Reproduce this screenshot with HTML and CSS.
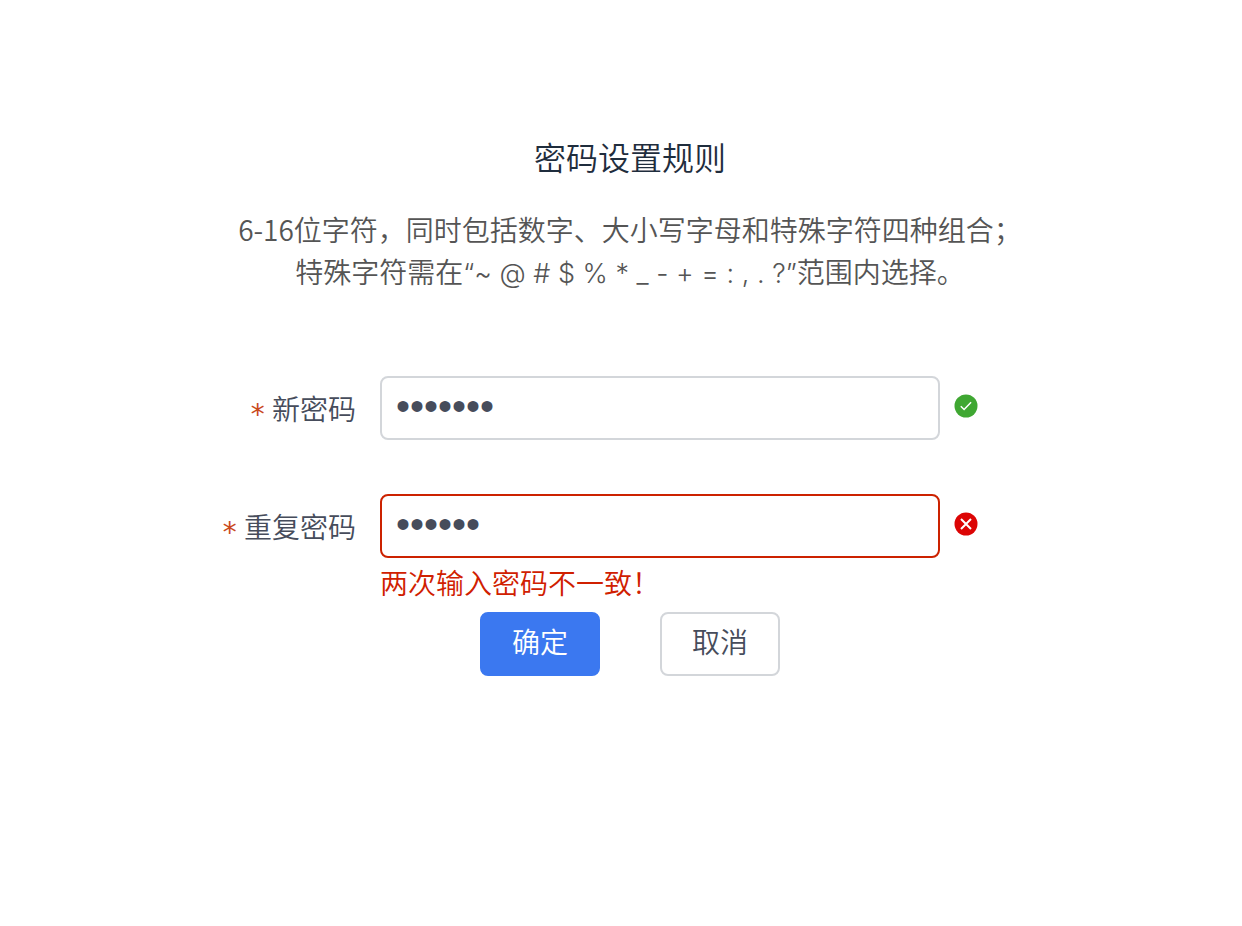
FILE: index.html
```
<!DOCTYPE html>
<html lang="zh-CN">
<head>
  <meta charset="UTF-8" />
  <meta name="viewport" content="width=device-width, initial-scale=1.0"/>
  <title>密码设置规则</title>
  <link rel="stylesheet" href="styles.css">
</head>
<body>
  <main class="page">
    <h1 class="title">密码设置规则</h1>
    <p class="rules">6-16位字符，同时包括数字、大小写字母和特殊字符四种组合；<br>特殊字符需在<span class="symbols">“~ @ # $ % * _ - + = : , . ?”</span>范围内选择。</p>

    <form class="form">
      <div class="row">
        <label class="label" for="password"><span class="star">*</span>新密码</label>
        <input class="input" id="password" type="password" value="Abc12#$">
        <svg class="icon" viewBox="0 0 24 24" aria-hidden="true">
          <circle cx="12" cy="12" r="11.5" fill="#3fa732"/>
          <path d="M6.8 12.3l3.3 3.2 7-7.2" fill="none" stroke="#fff" stroke-width="1.5"/>
        </svg>
      </div>
      <div class="row">
        <label class="label" for="repeat"><span class="star">*</span>重复密码</label>
        <input class="input error" id="repeat" type="password" value="Abc12#">
        <svg class="icon" viewBox="0 0 24 24" aria-hidden="true">
          <circle cx="12" cy="12" r="11.5" fill="#dc0505"/>
          <path d="M7 7l10 10M17 7l-10 10" fill="none" stroke="#fff" stroke-width="2"/>
        </svg>
        <p class="message">两次输入密码不一致！</p>
      </div>
      <div class="buttons">
        <button class="btn primary" type="submit">确定</button>
        <button class="btn" type="button">取消</button>
      </div>
    </form>
  </main>
</body>
</html>
```
FILE: styles.css
```
body {
  margin: 0;
  background: #fff;
  color: #464c5b;
  font-family: "Noto Sans CJK SC", sans-serif;
  font-size: 28px;
  font-weight: 350;
}
.page {
  padding: 132px 0 40px 18px;
}
.title {
  margin: 0;
  color: #1f2d3d;
  font-size: 32px;
  font-weight: 350;
  line-height: 48px;
  text-align: center;
}
.rules {
  margin: 28px 0 0;
  color: #555;
  line-height: 42px;
  text-align: center;
}
.symbols {
  font-family: Inter, sans-serif;
  font-size: 27px;
  line-height: 1;
}
.form {
  margin-top: 84px;
}
.row {
  display: grid;
  grid-template-columns: 1fr 560px 1fr;
  align-items: center;
  margin-bottom: 54px;
  padding-left: 60px;
}
.row:has(.message) {
  margin-bottom: 0;
}
.label {
  padding-right: 24px;
  line-height: 64px;
  text-align: right;
}
.star {
  margin-right: 6px;
  color: #c9481c;
  font-family: "DejaVu Sans Mono", monospace;
  font-size: 28px;
  line-height: 1;
  vertical-align: -4px;
}
.input {
  box-sizing: border-box;
  width: 100%;
  height: 64px;
  padding: 0 14px 4px;
  border: 2px solid #d3d6da;
  border-radius: 8px;
  outline: none;
  background: #fff;
  color: #464c5b;
  font-family: "Liberation Sans", sans-serif;
  font-size: 40px;
}
.input.error {
  border-color: #cc2200;
}
.icon {
  width: 24px;
  height: 24px;
  margin: 0 0 4px 14px;
}
.message {
  grid-column: 2;
  margin: 0;
  color: #d02000;
  line-height: 48px;
}
.buttons {
  display: flex;
  justify-content: center;
  gap: 60px;
  margin-top: 6px;
}
.btn {
  width: 120px;
  height: 64px;
  padding: 0 0 6px;
  border: 2px solid #d3d6da;
  border-radius: 8px;
  background: #fff;
  color: #464c5b;
  font: inherit;
  cursor: pointer;
}
.btn.primary {
  border-color: #3b78f0;
  background: #3b78f0;
  color: #fff;
}
```
